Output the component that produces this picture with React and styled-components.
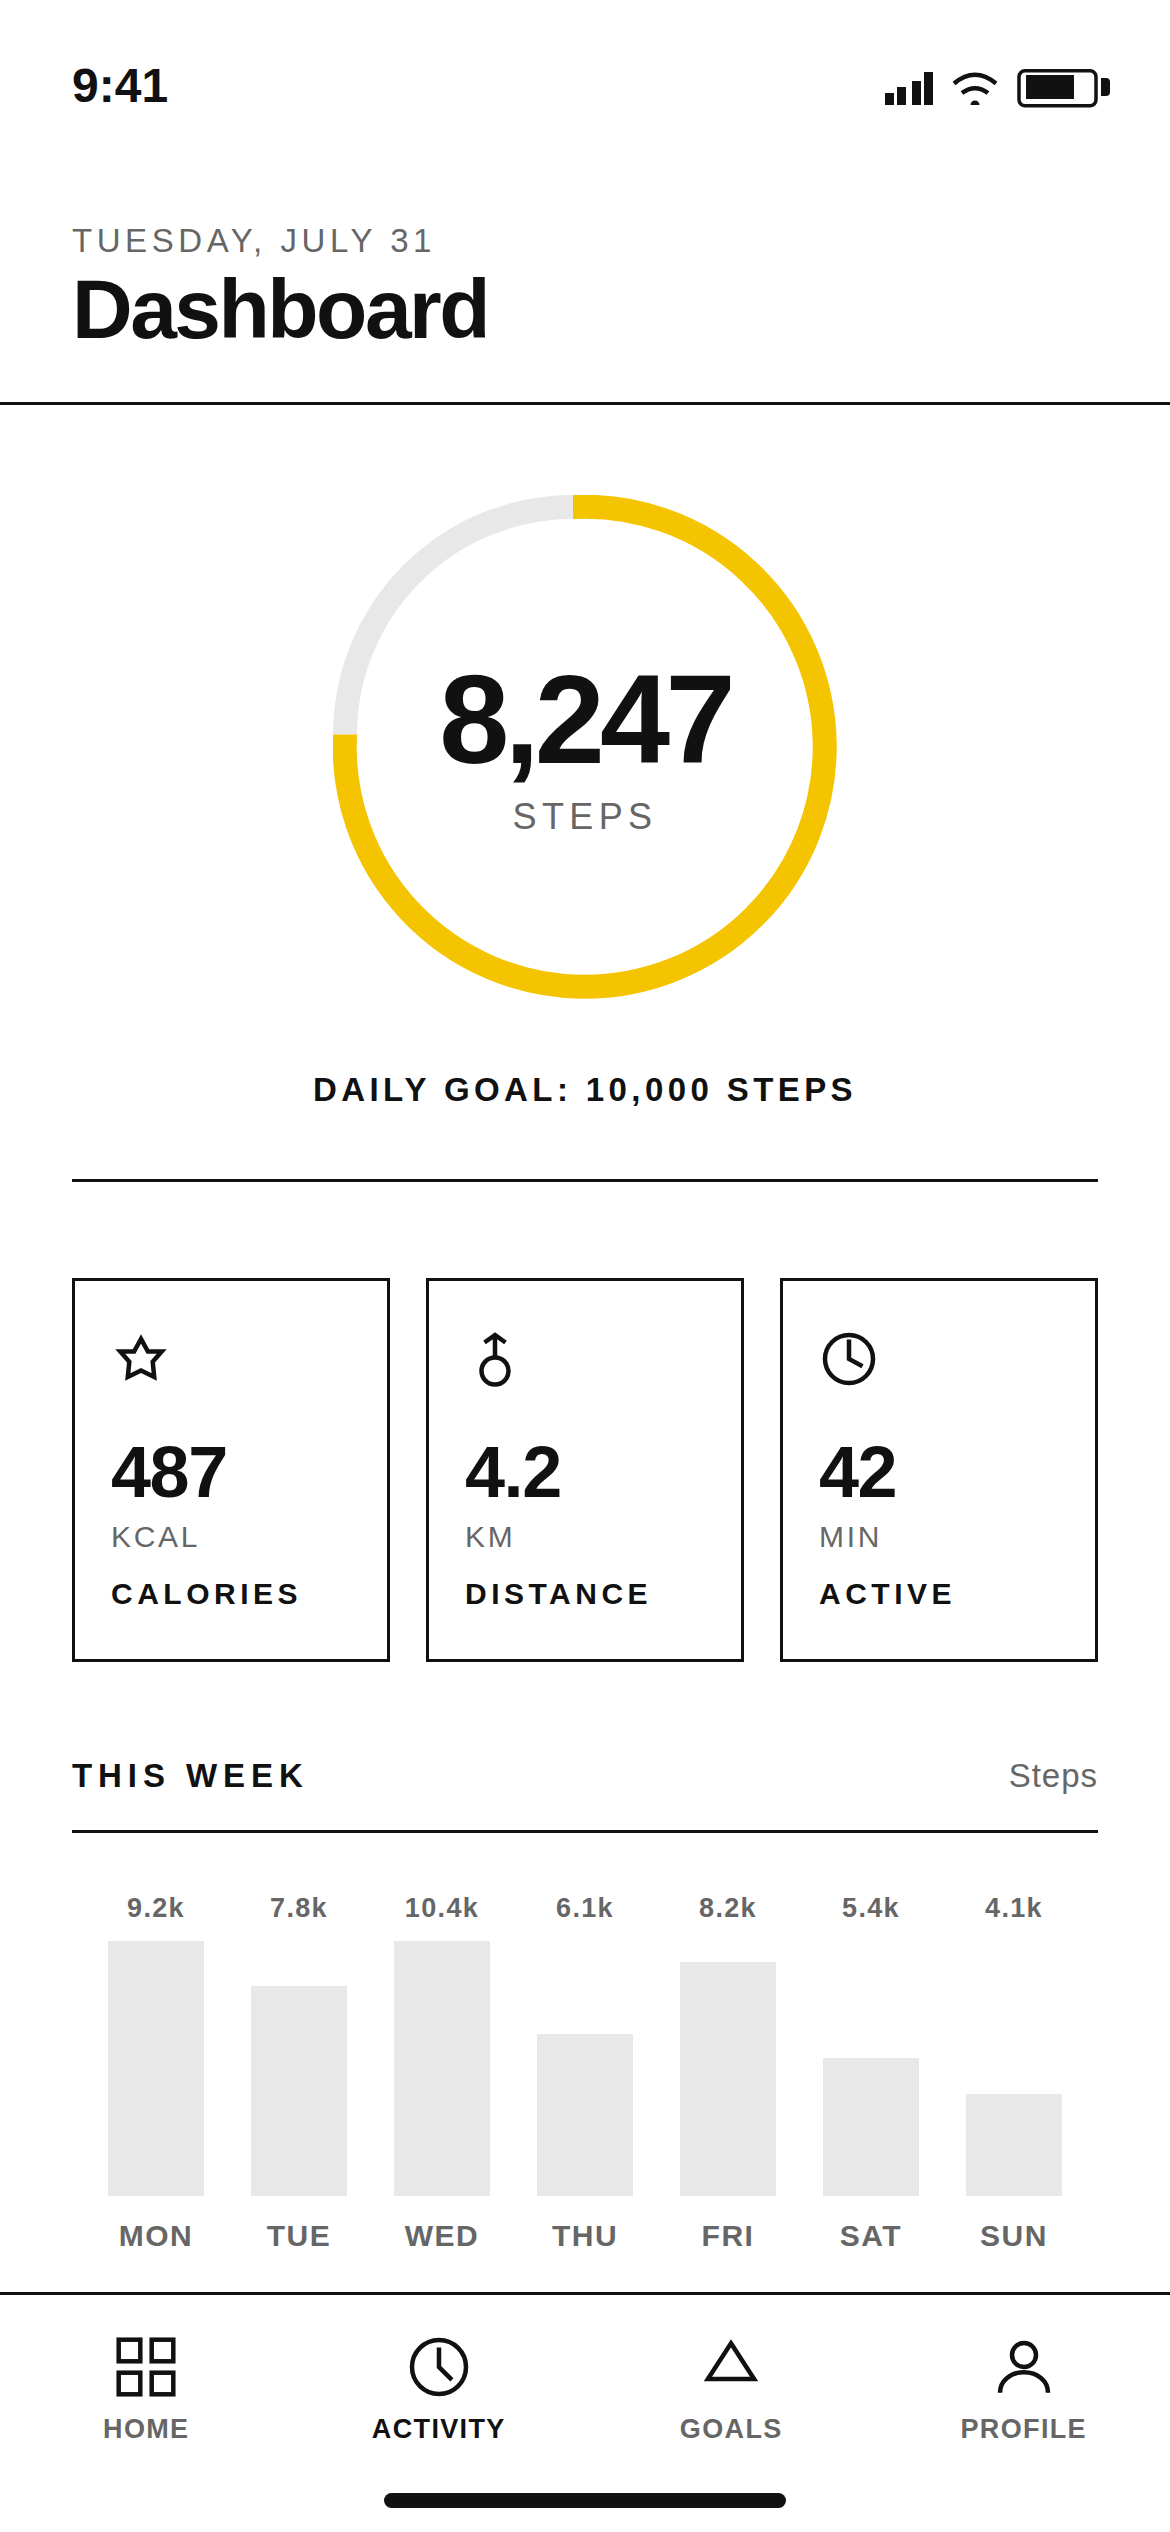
import React from "react";
import styled, { createGlobalStyle } from "styled-components";

const Global = createGlobalStyle`
  html, body { margin: 0; padding: 0; background: #fff; }
  * { box-sizing: border-box; }
  #root { width: 1170px; height: 2532px; }
`;
const INK = "#111111";
const GREY = "#666666";

const Screen = styled.div`
  width: 1170px; height: 2532px; background: #fff; display: flex; flex-direction: column;
  font-family: "Liberation Sans", Arial, sans-serif; color: ${INK}; overflow: hidden;
`;
const StatusBar = styled.div`
  height: 132px; padding: 59px 60px 0 72px; display: flex; justify-content: space-between; align-items: flex-start;
`;
const Time = styled.div`font-size: 48px; line-height: 54px; font-weight: 700;`;
const StatusIcons = styled.svg`display: block; margin-top: 10px;`;
const Header = styled.header`
  height: 273px; padding: 90px 72px 0; border-bottom: 3px solid ${INK};
`;
const DateLine = styled.div`font-size: 33px; line-height: 38px; letter-spacing: 4.56px; color: ${GREY};`;
const Title = styled.h1`margin: 3px 0 0; font-size: 84px; line-height: 92px; font-weight: 700; letter-spacing: -2.52px;`;
const RingSection = styled.section`
  margin: 0 72px; height: 777px; border-bottom: 3px solid ${INK}; padding-top: 90px;
  display: flex; flex-direction: column; align-items: center;
`;
const RingWrap = styled.div`position: relative; width: 504px; height: 504px;`;
const RingSvg = styled.svg`display: block;`;
const RingCenter = styled.div`
  position: absolute; inset: 0; padding-top: 4px; display: flex; flex-direction: column; align-items: center; justify-content: center;
`;
const Steps = styled.div`font-size: 126px; line-height: 120px; font-weight: 700; letter-spacing: -4.8px;`;
const StepsLabel = styled.div`font-size: 36px; line-height: 42px; letter-spacing: 5.4px; color: ${GREY}; margin-top: 16px;`;
const Goal = styled.div`margin-top: 72px; font-size: 33px; line-height: 38px; font-weight: 700; letter-spacing: 4.4px;`;
const Cards = styled.section`
  margin: 96px 72px 0; display: grid; grid-template-columns: repeat(3, 318px); justify-content: space-between;
`;
const Card = styled.div`
  height: 384px; border: 3px solid ${INK}; padding: 48px 36px 0; display: flex; flex-direction: column;
`;
const CardIcon = styled.svg`display: block; width: 60px; height: 60px;`;
const CardValue = styled.div`margin-top: 43px; font-size: 72px; line-height: 80px; font-weight: 700; letter-spacing: -1.44px;`;
const CardUnit = styled.div`margin-top: 7px; font-size: 30px; line-height: 36px; letter-spacing: 2.7px; color: ${GREY};`;
const CardLabel = styled.div`margin-top: 21px; font-size: 30px; line-height: 36px; font-weight: 700; letter-spacing: 4.5px;`;
const WeekHead = styled.div`
  margin: 95px 72px 0; height: 76px; border-bottom: 3px solid ${INK}; display: flex; justify-content: space-between; align-items: flex-start;
`;
const WeekTitle = styled.div`font-size: 33px; line-height: 38px; font-weight: 700; letter-spacing: 5.94px;`;
const WeekUnit = styled.div`font-size: 33px; line-height: 38px; color: ${GREY}; letter-spacing: 0.99px;`;
const Chart = styled.div`margin: 0 72px; padding: 0 36px; height: 459px; display: flex; justify-content: space-between;`;
const Col = styled.div`width: 96px; display: flex; flex-direction: column; align-items: center; position: relative;`;
const ColValue = styled.div`
  position: absolute; top: 60px; left: -20px; right: -20px; text-align: center;
  font-size: 27px; line-height: 30px; font-weight: 700; color: ${GREY}; letter-spacing: 1.35px;
`;
const BarArea = styled.div`height: 363px; width: 100%; display: flex; align-items: flex-end;`;
const Bar = styled.div`width: 96px; background: #e8e8e8;`;
const ColDay = styled.div`margin-top: 22px; font-size: 30px; line-height: 36px; font-weight: 700; letter-spacing: 1.5px; color: ${GREY};`;
const Nav = styled.nav`
  flex: 1; border-top: 3px solid ${INK}; position: relative; display: grid; grid-template-columns: repeat(4, 1fr); padding-top: 39px;
  align-items: start;
`;
const NavItem = styled.div`display: flex; flex-direction: column; align-items: center; color: ${p => (p.$active ? INK : GREY)};`;
const NavSvg = styled.svg`display: block; width: 66px; height: 66px; color: ${INK};`;
const NavLabel = styled.div`margin-top: 13px; font-size: 27px; line-height: 32px; font-weight: 700; letter-spacing: 1.35px;`;
const HomeBar = styled.div`
  position: absolute; left: 384px; bottom: 24px; width: 402px; height: 15px; border-radius: 9px; background: ${INK};
`;

const week = [
  ["9.2k", "MON", 255], ["7.8k", "TUE", 210], ["10.4k", "WED", 255], ["6.1k", "THU", 162],
  ["8.2k", "FRI", 234], ["5.4k", "SAT", 138], ["4.1k", "SUN", 102],
];
const S = { fill: "none", stroke: "currentColor", strokeWidth: 1.5 };

export default function App() {
  return (
    <Screen>
      <Global />
      <StatusBar>
        <Time>9:41</Time>
        <StatusIcons width="225" height="40" viewBox="0 0 225 40" fill={INK}>
          <rect x="0" y="24" width="9" height="12" /><rect x="12" y="18" width="9" height="18" />
          <rect x="27" y="12" width="9" height="24" /><rect x="39" y="3" width="9" height="33" />
          <path d="M69 14.5Q90 -3 111 14.5M77 24Q90 14.5 103 24" fill="none" stroke={INK} strokeWidth="4.5" />
          <path d="M85.5 36a4.5 4.5 0 0 1 9 0z" />
          <rect x="134" y="1.75" width="77" height="35" rx="6" fill="none" stroke={INK} strokeWidth="3.5" />
          <rect x="141" y="6" width="48" height="24" />
          <path d="M216 9h5a4 4 0 0 1 4 4v10a4 4 0 0 1-4 4h-5z" />
        </StatusIcons>
      </StatusBar>
      <Header>
        <DateLine>TUESDAY, JULY 31</DateLine>
        <Title>Dashboard</Title>
      </Header>
      <RingSection>
        <RingWrap>
          <RingSvg width="504" height="504" viewBox="0 0 504 504" fill="none" strokeWidth="24">
            <path d="M12 239.5V239A228 228 0 0 1 240 12H240.5" stroke="#e8e8e8" />
            <path d="M240 12H240.5A240 240 0 1 1 12 240V239.5" stroke="#f5c400" />
          </RingSvg>
          <RingCenter>
            <Steps>8,247</Steps>
            <StepsLabel>STEPS</StepsLabel>
          </RingCenter>
        </RingWrap>
        <Goal>DAILY GOAL: 10,000 STEPS</Goal>
      </RingSection>
      <Cards>
        <Card>
          <CardIcon viewBox="0 0 20 20" {...S}><path d="M10 3.3L12.3 7.5H16.9L13.9 10.9L14.4 16L10 13.8L5.6 16L6.1 10.9L3.1 7.5H7.7Z" /></CardIcon>
          <CardValue>487</CardValue><CardUnit>KCAL</CardUnit><CardLabel>CALORIES</CardLabel>
        </Card>
        <Card>
          <CardIcon viewBox="0 0 20 20" {...S}><circle cx="10" cy="14" r="4.5" /><path d="M10 9.5V2M6.5 4.5L10 2L13.5 4.5" /></CardIcon>
          <CardValue>4.2</CardValue><CardUnit>KM</CardUnit><CardLabel>DISTANCE</CardLabel>
        </Card>
        <Card>
          <CardIcon viewBox="0 0 20 20" {...S}><circle cx="10" cy="10" r="8" /><path d="M10 3.5V10L14.5 12.4" /></CardIcon>
          <CardValue>42</CardValue><CardUnit>MIN</CardUnit><CardLabel>ACTIVE</CardLabel>
        </Card>
      </Cards>
      <WeekHead><WeekTitle>THIS WEEK</WeekTitle><WeekUnit>Steps</WeekUnit></WeekHead>
      <Chart>
        {week.map(([v, d, h]) => (
          <Col key={d}>
            <ColValue>{v}</ColValue>
            <BarArea><Bar style={{ height: h }} /></BarArea>
            <ColDay>{d}</ColDay>
          </Col>
        ))}
      </Chart>
      <Nav>
        <NavItem>
          <NavSvg viewBox="0 0 22 22" {...S}>
            <rect x="1.9" y="1.9" width="7.2" height="7.2" /><rect x="12.9" y="1.9" width="7.2" height="7.2" />
            <rect x="1.9" y="12.9" width="7.2" height="7.2" /><rect x="12.9" y="12.9" width="7.2" height="7.2" />
          </NavSvg>
          <NavLabel>HOME</NavLabel>
        </NavItem>
        <NavItem $active>
          <NavSvg viewBox="0 0 22 22" {...S}><circle cx="11" cy="11" r="9" /><path d="M11 4.5V11L15.3 15.3" /></NavSvg>
          <NavLabel>ACTIVITY</NavLabel>
        </NavItem>
        <NavItem>
          <NavSvg viewBox="0 0 22 22" {...S}><path d="M11 3.1L18.7 15H3.3Z" /></NavSvg>
          <NavLabel>GOALS</NavLabel>
        </NavItem>
        <NavItem>
          <NavSvg viewBox="0 0 22 22" {...S}><circle cx="11" cy="7" r="4" /><path d="M3 19.6C3 15.5 6.6 12.75 11 12.75S19 15.5 19 19.6" /></NavSvg>
          <NavLabel>PROFILE</NavLabel>
        </NavItem>
        <HomeBar />
      </Nav>
    </Screen>
  );
}
